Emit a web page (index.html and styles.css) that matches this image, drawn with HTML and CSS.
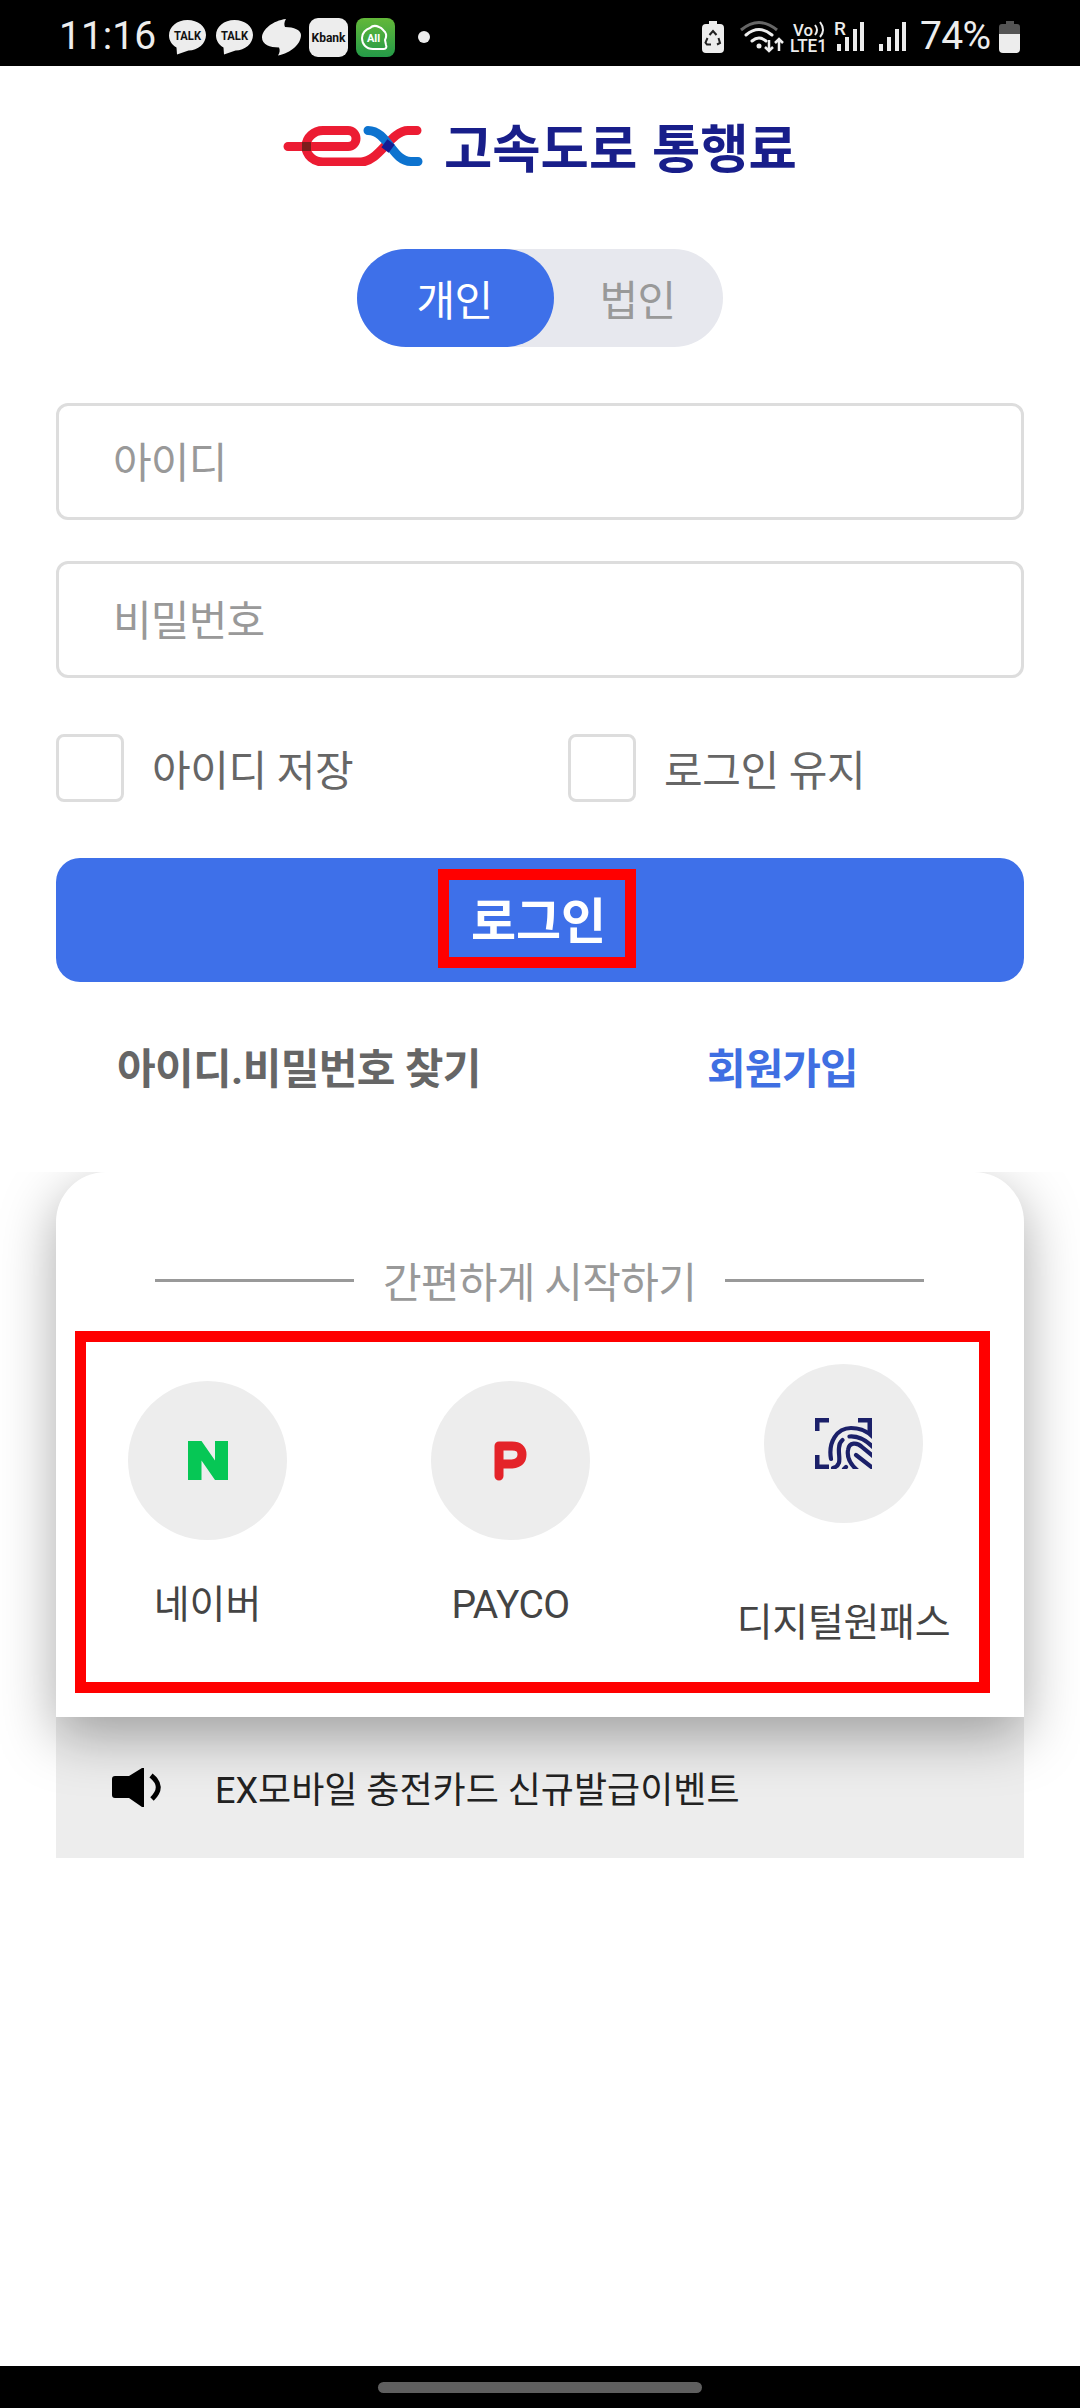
FILE: index.html
```html
<!DOCTYPE html>
<html lang="ko">
<head>
<meta charset="utf-8">
<meta name="viewport" content="width=device-width">
<title>고속도로 통행료</title>
<link rel="stylesheet" href="styles.css">
</head>
<body>
<div class="phone">
  <header class="status">
    <span class="clock">11:16</span>
    <svg class="status-left" width="240" height="66" viewBox="165 0 240 66">
      <g fill="#ededed">
        <path d="M187.500 20c10.500 0 18.500 6.500 18.500 15s-8 15.500-17.500 15.500L177 54.500l-.5-7c-4.500-2.500-7.500-7-7.500-12 0-9 8-15.500 18.500-15.500z"/>
        <path d="M234.500 20c10.500 0 18.500 6.500 18.500 15s-8 15.500-17.500 15.500L224 54.500l-.5-7c-4.500-2.500-7.500-7-7.500-12 0-9 8-15.500 18.500-15.500z"/>
        <path d="M286 19c-2 3-2 6-1 8 9 0 16 3 16 8 0 9-10 18-23 20.500 2-3 2-6 1-8-9 0-17-3-17-10 0-8 11-17 24-18.500z"/>
        <rect x="309" y="18" width="39" height="39" rx="9"/>
      </g>
      <defs><linearGradient id="g" x2="0" y2="1"><stop stop-color="#63b839"/><stop offset="1" stop-color="#249a48"/></linearGradient></defs>
      <rect x="356" y="18" width="39" height="39" rx="8" fill="url(#g)"/>
      <path d="M384 49h-11c-7 0-11-5-11-11 0-5 4-9 8-10 3-3 7-2 9-1 4 1 4 4 6 5 2 3 1 6 0 8l1 5c1 2 0 4-2 4z" fill="none" stroke="#fff" stroke-width="2" stroke-linejoin="round"/>
      <g class="mini" fill="#111">
        <text x="187.500" y="40" font-size="12" textLength="27" lengthAdjust="spacingAndGlyphs">TALK</text>
        <text x="234.500" y="40" font-size="12" textLength="27" lengthAdjust="spacingAndGlyphs">TALK</text>
        <text x="328.500" y="41.500" font-size="12" textLength="34" lengthAdjust="spacingAndGlyphs">Kbank</text>
        <text x="373.500" y="42" font-size="11" fill="#fff">All</text>
      </g>
    </svg>
    <span class="more-dot"></span>
    <svg class="status-right" width="220" height="66" viewBox="698 0 220 66" fill="#ededed">
      <path d="M710 21h8v3h3q4 0 4 4v21q0 4-4 4h-14q-4 0-4-4V28q0-4 4-4h3z"/>
      <g fill="none" stroke="#222" stroke-width="2"><path d="M710.500 35l3.500-4 3.500 4M719.500 38l1.500 5-3 1.500M712 44.500h-4l-1.500-2 2-4.500"/></g>
      <g fill="none" stroke-width="3">
        <path d="M742 30q18-15 36 0" stroke="#666"/>
        <path d="M747 35q13-11 26 0M753 41q7-6 14 0" stroke="#ededed" stroke-linecap="round"/>
        <path d="M770 40v11m-4-4l4 4 4-4M780 51V39m-4 4l4-4 4 4" stroke="#ededed" stroke-width="2.500"/>
      </g>
      <circle cx="760" cy="46" r="2.500"/>
      <g class="net">
        <text x="794" y="36" font-size="17" textLength="20" lengthAdjust="spacingAndGlyphs">Vo</text>
        <text x="791" y="52" font-size="17.500" textLength="37" lengthAdjust="spacingAndGlyphs">LTE1</text>
        <text x="835" y="35" font-size="19">R</text>
      </g>
      <path d="M816 25q4 5 0 10M821 22q6 8 0 15" fill="none" stroke="#ededed" stroke-width="2"/>
      <path d="M838 44h4v7h-4zM846 37h4v14h-4zM854 29h4v22h-4zM861 22h4v29h-4zM880 44h4v7h-4zM888 37h4v14h-4zM896 29h4v22h-4zM903 22h4v29h-4z"/>
    </svg>
    <span class="percent">74%</span>
    <svg class="battery" width="22" height="32" viewBox="0 0 22 32"><path d="M7 0h8v3h3q3 0 3 3v7H0V6q0-3 3-3h4z" fill="#555"/><path d="M0 13h21v15q0 4-4 4H4q-4 0-4-4z" fill="#ededed"/></svg>
  </header>

  <main>
    <h1 class="brand">
      <svg width="140" height="41" viewBox="283 125 140 41" fill="none" stroke-width="9" stroke-linecap="round">
        <path d="M288 146.500h60c5 0 8-4 8-8s-3-8-8-8h-25c-9 0-17 7-17 16s8 15.500 17 15.500h38c18 0 30-31.500 47-31.500h9" stroke="#ec1c33"/>
        <path d="M368 130.500c20 0 24 31 43 31h7" stroke="#0d73cf"/>
        <path d="M385 150l6-8" stroke="#151d92" stroke-linecap="butt"/>
        <path d="M302 146.500h9" stroke="#7d1d1b" stroke-linecap="butt"/>
      </svg>
      <span>고속도로 통행료</span>
    </h1>

    <div class="tabs"><button class="tab on">개인</button><button class="tab">법인</button></div>

    <form class="form">
      <input class="field" placeholder="아이디">
      <input class="field" placeholder="비밀번호">
      <div class="checks">
        <label><i class="box"></i><span>아이디 저장</span></label>
        <label><i class="box"></i><span>로그인 유지</span></label>
      </div>
      <button type="button" class="login"><span class="mark">로그인</span></button>
    </form>

    <nav class="links"><a class="find">아이디.비밀번호 찾기</a><a class="join">회원가입</a></nav>

    <section class="easy">
      <div class="card">
        <h2 class="divider"><span>간편하게 시작하기</span></h2>
        <div class="providers">
          <a class="provider naver">
            <span class="disc"><svg width="40" height="39" viewBox="0 0 40 39"><path d="M0 0h13.500L27 19.500V0h13v39H27L13.500 19.500V39H0z" fill="#06c755"/></svg></span>
            <span>네이버</span>
          </a>
          <a class="provider payco">
            <span class="disc"><svg width="34" height="40" viewBox="0 0 34 40"><path d="M5 35V5h13q10 0 10 8.500T18 23H7" fill="none" stroke="#e42329" stroke-width="9" stroke-linejoin="round" stroke-linecap="round"/></svg></span>
            <span>PAYCO</span>
          </a>
          <a class="provider onepass">
            <span class="disc"><svg width="57" height="51" viewBox="0 0 57 51" fill="none" stroke="#1b2069" stroke-width="4.500">
              <path d="M2.250 13V2.250H14M43 2.250H54.750V16M2.250 37V48.750H14"/>
              <g stroke-linecap="round" stroke-width="4.200"><path d="M16 41C13 24 22 10 36 10q13 0 22 9"/><path d="M18 50c10-3 5-12 6-20q0-5 3.500-8"/><path d="M34.500 18.500q12-1 24 11"/><path d="M29 51l2-2"/><path d="M42 52C34 45 32 38 33 32c1-8 9-8 14-3l12 10"/><path d="M41 37l18 14"/></g>
            </svg></span>
            <span>디지털원패스</span>
          </a>
        </div>
      </div>
      <div class="notice">
        <svg width="50" height="40" viewBox="0 0 50 40"><path d="M3 8h14L30 0h2v39h-2L17 30H3q-3 0-3-3V11q0-3 3-3z"/><path d="M39 7.500q14 11 1 23.500" fill="none" stroke="#000" stroke-width="5"/></svg>
        <span>EX모바일 충전카드 신규발급이벤트</span>
      </div>
    </section>
  </main>

  <footer class="gesture"><i></i></footer>
</div>
</body>
</html>
```
FILE: styles.css
```css
* { box-sizing: border-box; }
body { margin: 0; background: #fff; font-family: Roboto, "Noto Sans CJK KR", sans-serif; font-size: 42px; color: #666; }
.phone { width: 1080px; height: 2408px; display: flex; flex-direction: column; }
button, input { font: inherit; padding: 0; border: 0; }
svg { display: block; flex: none; }

.status { height: 66px; background: #000; color: #ededed; display: flex; align-items: center; padding-left: 59px; }
.clock { width: 106px; font-size: 39px; line-height: 66px; padding-top: 5px; }
.percent { width: 82px; font-size: 39px; line-height: 66px; padding: 5px 0 0 3px; white-space: nowrap; letter-spacing: -.7px; }
.more-dot { width: 12px; height: 12px; margin: 8px 267px 0 13px; border-radius: 50%; background: #ededed; }
.battery { margin-top: 8px; }
.mini { font-weight: 700; text-anchor: middle; }
.net { font-weight: 500; }

main { flex: 1; padding: 0 56px; }
.brand { margin: 50px 0 0; height: 60px; padding-left: 227px; display: flex; align-items: center; gap: 21px; color: #181e8a; font: 700 52.500px/60px "Noto Sans CJK KR", sans-serif; white-space: nowrap; }
.brand svg { margin-bottom: 2px; }
.brand span { padding-bottom: 3px; }
.tabs { display: flex; width: 366px; height: 98px; margin: 73px 0 0 301px; border-radius: 49px; background: #e7e8ee; }
.tab { width: 169px; padding: 0 2px 2px 0; background: none; color: #999; letter-spacing: -.7px; }
.tab.on { width: 197px; border-radius: 49px; background: #3e70e9; color: #fff; }

.form { margin-top: 56px; display: flex; flex-direction: column; }
.field { height: 117px; padding: 3px 54px 0; border: 3px solid #ddd; border-radius: 12px; margin-bottom: 41px; letter-spacing: -.8px; }
.field::placeholder { color: #999; opacity: 1; }
.checks { display: grid; grid-template-columns: 512px 1fr; margin-top: 15px; }
.checks label { display: flex; align-items: center; gap: 28px; height: 68px; letter-spacing: -.4px; }
.checks span { padding-bottom: 2px; }
.box { width: 68px; height: 68px; border: 3px solid #ddd; border-radius: 8px; }
.login { height: 124px; margin-top: 56px; padding: 11px 0 0 382px; display: flex; align-items: flex-start; border-radius: 24px; background: #3e70e9; color: #fff; font-weight: 700; font-size: 49px; }
.mark { width: 198px; height: 99px; border: 11px solid red; padding-left: 3px; line-height: 86px; }

.links { display: flex; margin-top: 58px; padding-left: 61px; height: 60px; line-height: 60px; font-weight: 700; white-space: nowrap; letter-spacing: -.6px; }
.find { width: 590px; }
.join { color: #3f6fe2; letter-spacing: -1px; }

.easy { margin: 72px -56px 0; padding: 0 56px; overflow: hidden; }
.card { position: relative; height: 545px; border-radius: 50px 50px 0 0; background: #fff; box-shadow: 0 18px 56px rgba(0, 0, 0, .34); padding: 74px 34px 0 19px; }
.divider { display: flex; align-items: center; gap: 29px; margin: 0; padding: 0 66px 0 80px; height: 66px; font-size: 42px; font-weight: 400; color: #999; white-space: nowrap; letter-spacing: -.7px; }
.divider::before, .divider::after { content: ""; flex: 1; height: 3px; background: #999; margin-top: 3px; }
.divider span { padding-top: 1px; }
.providers { display: grid; grid-template-columns: 243px 363px 303px; height: 362px; margin-top: 19px; border: 11px solid red; }
.provider { display: flex; flex-direction: column; align-items: center; font-size: 39px; color: #444; white-space: nowrap; padding-top: 39px; }
.disc { width: 159px; height: 159px; border-radius: 50%; background: #ededed; display: grid; place-items: center; }
.provider > span:last-child { line-height: 58px; margin-top: 36px; }
.payco { letter-spacing: -.5px; }
.onepass { padding-top: 22px; }
.onepass > span:last-child { margin-top: 71px; letter-spacing: -.3px; }
.notice { height: 141px; display: flex; align-items: center; gap: 53px; padding-left: 56px; background: #ededed; color: #222; font-size: 36px; white-space: nowrap; }
.notice span { padding-bottom: 2px; }

.gesture { height: 42px; background: #000; padding: 16px 0 0 378px; }
.gesture i { display: block; width: 324px; height: 11px; border-radius: 6px; background: #5f5f5f; }
```
